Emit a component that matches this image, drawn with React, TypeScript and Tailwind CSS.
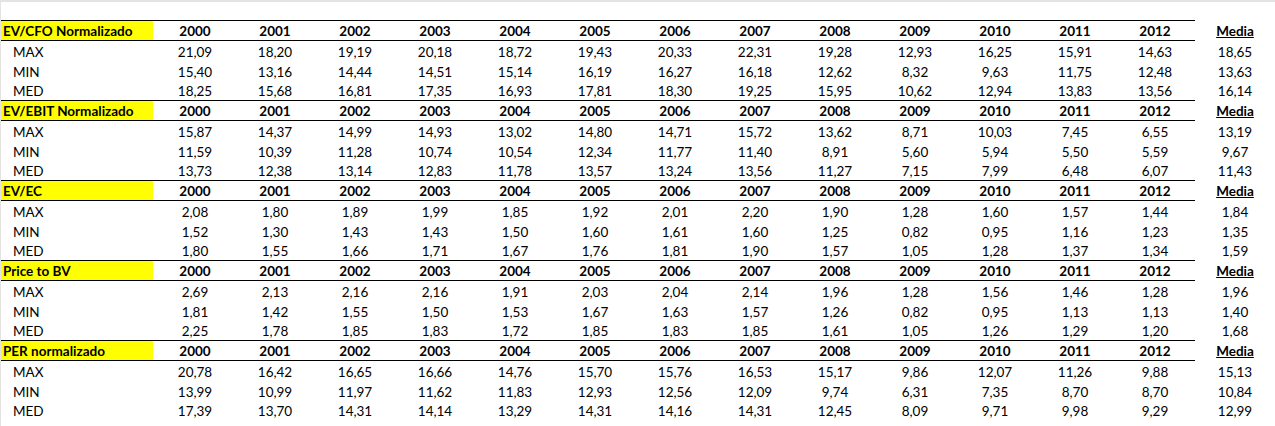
const years = ["2000", "2001", "2002", "2003", "2004", "2005", "2006", "2007", "2008", "2009", "2010", "2011", "2012"];

interface Section {
  title: string;
  rows: { label: string; values: string[]; media: string }[];
}

const sections: Section[] = [
  {
    title: "EV/CFO Normalizado",
    rows: [
      { label: "MAX", values: ["21,09", "18,20", "19,19", "20,18", "18,72", "19,43", "20,33", "22,31", "19,28", "12,93", "16,25", "15,91", "14,63"], media: "18,65" },
      { label: "MIN", values: ["15,40", "13,16", "14,44", "14,51", "15,14", "16,19", "16,27", "16,18", "12,62", "8,32", "9,63", "11,75", "12,48"], media: "13,63" },
      { label: "MED", values: ["18,25", "15,68", "16,81", "17,35", "16,93", "17,81", "18,30", "19,25", "15,95", "10,62", "12,94", "13,83", "13,56"], media: "16,14" },
    ],
  },
  {
    title: "EV/EBIT Normalizado",
    rows: [
      { label: "MAX", values: ["15,87", "14,37", "14,99", "14,93", "13,02", "14,80", "14,71", "15,72", "13,62", "8,71", "10,03", "7,45", "6,55"], media: "13,19" },
      { label: "MIN", values: ["11,59", "10,39", "11,28", "10,74", "10,54", "12,34", "11,77", "11,40", "8,91", "5,60", "5,94", "5,50", "5,59"], media: "9,67" },
      { label: "MED", values: ["13,73", "12,38", "13,14", "12,83", "11,78", "13,57", "13,24", "13,56", "11,27", "7,15", "7,99", "6,48", "6,07"], media: "11,43" },
    ],
  },
  {
    title: "EV/EC",
    rows: [
      { label: "MAX", values: ["2,08", "1,80", "1,89", "1,99", "1,85", "1,92", "2,01", "2,20", "1,90", "1,28", "1,60", "1,57", "1,44"], media: "1,84" },
      { label: "MIN", values: ["1,52", "1,30", "1,43", "1,43", "1,50", "1,60", "1,61", "1,60", "1,25", "0,82", "0,95", "1,16", "1,23"], media: "1,35" },
      { label: "MED", values: ["1,80", "1,55", "1,66", "1,71", "1,67", "1,76", "1,81", "1,90", "1,57", "1,05", "1,28", "1,37", "1,34"], media: "1,59" },
    ],
  },
  {
    title: "Price to BV",
    rows: [
      { label: "MAX", values: ["2,69", "2,13", "2,16", "2,16", "1,91", "2,03", "2,04", "2,14", "1,96", "1,28", "1,56", "1,46", "1,28"], media: "1,96" },
      { label: "MIN", values: ["1,81", "1,42", "1,55", "1,50", "1,53", "1,67", "1,63", "1,57", "1,26", "0,82", "0,95", "1,13", "1,13"], media: "1,40" },
      { label: "MED", values: ["2,25", "1,78", "1,85", "1,83", "1,72", "1,85", "1,83", "1,85", "1,61", "1,05", "1,26", "1,29", "1,20"], media: "1,68" },
    ],
  },
  {
    title: "PER normalizado",
    rows: [
      { label: "MAX", values: ["20,78", "16,42", "16,65", "16,66", "14,76", "15,70", "15,76", "16,53", "15,17", "9,86", "12,07", "11,26", "9,88"], media: "15,13" },
      { label: "MIN", values: ["13,99", "10,99", "11,97", "11,62", "11,83", "12,93", "12,56", "12,09", "9,74", "6,31", "7,35", "8,70", "8,70"], media: "10,84" },
      { label: "MED", values: ["17,39", "13,70", "14,31", "14,14", "13,29", "14,31", "14,16", "14,31", "12,45", "8,09", "9,71", "9,98", "9,29"], media: "12,99" },
    ],
  },
];

const rowHeights = ["h-[20px]", "h-[20px]", "h-[19px]"];

const App = () => {
  return (
    <div className="w-[1275px] h-[426px] overflow-hidden bg-white border-t-2 border-l border-[#e3e3e3] text-black text-[13.5px] font-['Lato',sans-serif]">
      <div className="pt-[18px]">
        {sections.map((section) => (
          <div key={section.title}>
            {/* Header */}
            <div className="flex">
              <div className="w-[1194px] h-[21px] flex border-y border-black font-bold">
                <div className="w-[154px] flex">
                  <div className="w-[152px] bg-[#ffff00] flex items-center pl-[2px] pt-[1px]">{section.title}</div>
                </div>
                {years.map((y) => (
                  <div key={y} className="w-[80px] flex items-center justify-center pt-[1px]">{y}</div>
                ))}
              </div>
              <div className="w-[80px] h-[21px] flex items-center justify-center font-bold underline pt-[1px]">Media</div>
            </div>

            {/* Rows */}
            {section.rows.map((row, i) => (
              <div key={row.label} className={`flex ${rowHeights[i]}`}>
                <div className="w-[154px] flex items-center pl-[12px] pt-[2px]">{row.label}</div>
                {row.values.map((v, j) => (
                  <div key={j} className="w-[80px] flex items-center justify-center pt-[2px]">{v}</div>
                ))}
                <div className="w-[80px] flex items-center justify-center pt-[2px]">{row.media}</div>
              </div>
            ))}
          </div>
        ))}
      </div>
    </div>
  );
};

export default App;
